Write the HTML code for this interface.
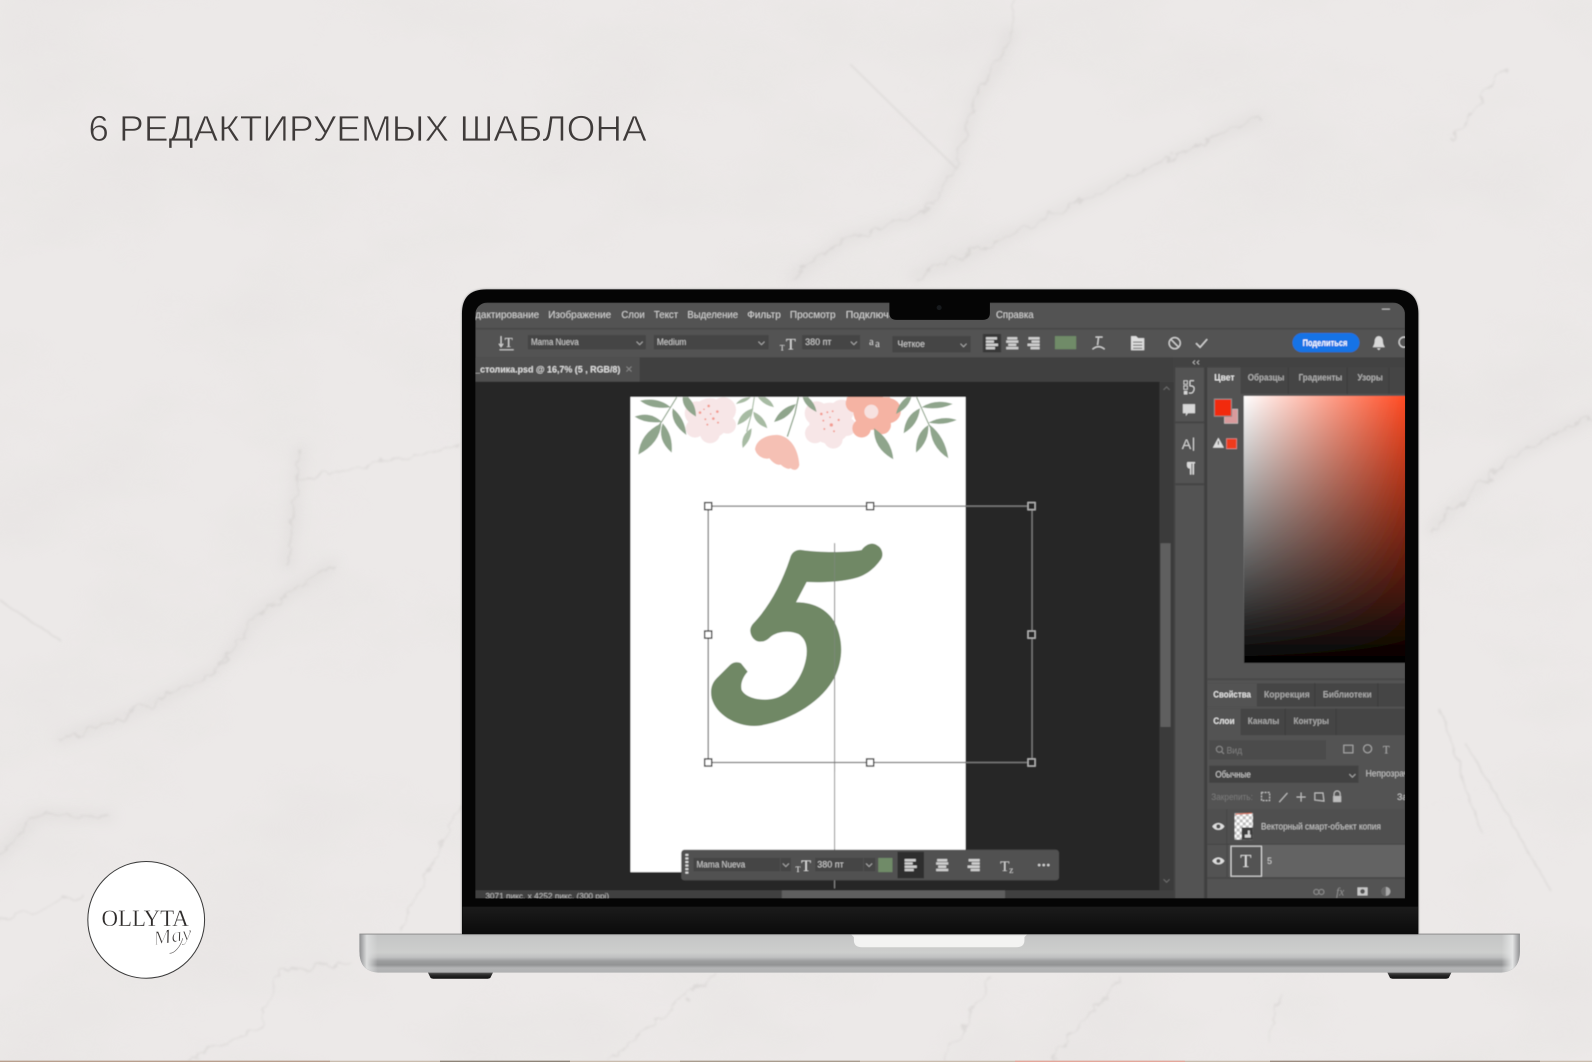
<!DOCTYPE html>
<html lang="ru"><head><meta charset="utf-8"><title>6 редактируемых шаблона</title>
<style>html,body{margin:0;padding:0;background:#ece9e8;overflow:hidden}svg{display:block}text{font-family:"Liberation Sans","Noto Sans CJK SC",sans-serif}</style></head>
<body>
<svg xmlns="http://www.w3.org/2000/svg" width="1592" height="1062" viewBox="0 0 1592 1062">
<defs>
<filter id="cloud" x="0" y="0" width="100%" height="100%"><feTurbulence type="fractalNoise" baseFrequency="0.006 0.009" numOctaves="5" seed="11"/><feColorMatrix values="0 0 0 0 .66  0 0 0 0 .64  0 0 0 0 .63  1.5 0 0 0 -.62"/></filter>
<filter id="v1" x="-5%" y="-5%" width="110%" height="110%"><feTurbulence type="fractalNoise" baseFrequency=".07" numOctaves="3" seed="3" result="n"/><feDisplacementMap in="SourceGraphic" in2="n" scale="12" result="d"/><feGaussianBlur in="d" stdDeviation="1.100"/></filter>
<filter id="v3" x="-5%" y="-5%" width="110%" height="110%"><feGaussianBlur stdDeviation="6"/></filter>
<filter id="soft" x="-2%" y="-2%" width="104%" height="104%"><feGaussianBlur stdDeviation=".48"/></filter>
<filter id="edge" x="-2%" y="-2%" width="104%" height="104%"><feGaussianBlur stdDeviation="1"/></filter>
<clipPath id="scr"><path d="M468 885V310a12 12 0 0 1 12-12h892a12 12 0 0 1 12 12v575z"/></clipPath>
<clipPath id="mn"><rect x="468" y="298" width="408" height="30"/></clipPath>
<clipPath id="doc"><rect x="621" y="391" width="330" height="468"/></clipPath>
<linearGradient id="sat"><stop offset="0" stop-color="#fff"/><stop offset="1" stop-color="#ff4a22"/></linearGradient>
<linearGradient id="blk" x2="0" y2="1"><stop offset="0" stop-color="#000" stop-opacity="0"/><stop offset="1" stop-color="#000"/></linearGradient>
<linearGradient id="base" x2="0" y2="1"><stop offset="0" stop-color="#c4c5c5"/><stop offset=".48" stop-color="#cdcecd"/><stop offset=".6" stop-color="#bfc0c0"/><stop offset=".7" stop-color="#9c9d9e"/><stop offset=".8" stop-color="#929394"/><stop offset=".88" stop-color="#b4b5b6"/><stop offset="1" stop-color="#b0b1b2"/></linearGradient>
<linearGradient id="endL"><stop offset="0" stop-color="#8d8e90"/><stop offset=".4" stop-color="#dcdddd"/><stop offset="1" stop-color="#dcdddd" stop-opacity="0"/></linearGradient>
<linearGradient id="endR"><stop offset="0" stop-color="#e4e5e5" stop-opacity="0"/><stop offset=".6" stop-color="#e4e5e5"/><stop offset="1" stop-color="#8d8e90"/></linearGradient>
<linearGradient id="chin" x2="0" y2="1"><stop offset="0" stop-color="#1b1b1b"/><stop offset="1" stop-color="#0b0b0b"/></linearGradient>
<linearGradient id="foot" x2="0" y2="1"><stop offset="0" stop-color="#6a6a6a"/><stop offset=".45" stop-color="#2b2b2b"/><stop offset="1" stop-color="#0e0e0e"/></linearGradient>
<pattern id="chk" width="6" height="6" patternUnits="userSpaceOnUse"><rect width="6" height="6" fill="#fff"/><rect width="3" height="3" fill="#bdbdbd"/><rect x="3" y="3" width="3" height="3" fill="#bdbdbd"/></pattern>
<g id="al"><rect x="-6" y="-6" width="11" height="2.500"/><rect x="-6" y="-2.800" width="8" height="2.500"/><rect x="-6" y=".4" width="12" height="2.500"/><rect x="-6" y="3.600" width="9" height="2.500"/></g>
<g id="ac"><rect x="-5" y="-6" width="10" height="2.500"/><rect x="-6" y="-2.800" width="12" height="2.500"/><rect x="-4" y=".4" width="8" height="2.500"/><rect x="-6" y="3.600" width="12" height="2.500"/></g>
<g id="ar"><rect x="-5" y="-6" width="11" height="2.500"/><rect x="-2" y="-2.800" width="8" height="2.500"/><rect x="-6" y=".4" width="12" height="2.500"/><rect x="-3" y="3.600" width="9" height="2.500"/></g>
<g id="eye"><path d="M-6 0C-3-4.500 3-4.500 6 0 3 4.500-3 4.500-6 0z" fill="#dedede"/><circle r="2" fill="#4d4d4d"/></g>
<path id="chev" d="M-3-1.500 0 1.500 3-1.500" fill="none" stroke="#a8a8a8" stroke-width="1"/>
</defs>

<rect width="1592" height="1062" fill="#ece9e8"/>
<rect width="1592" height="1062" filter="url(#cloud)" opacity=".2"/>
<g fill="none" stroke="#c9c6c4" stroke-linecap="round" stroke-linejoin="round">
<g filter="url(#v3)" opacity=".2" stroke-width="12">
<path d="M1010 33L1000 60 975 100 955 167 925 213 843 240 792 277"/><path d="M1259 117L1117 183 1015 233 914 277"/><path d="M60 740L140 710 217 670 260 612 333 565"/><path d="M0 855L37 815 110 817"/><path d="M1592 415L1517 455 1467 495 1430 530"/><path d="M300 450L293 520 287 565"/>
</g>
<g filter="url(#v1)" opacity=".42" stroke-width="1.500">
<path d="M1015 0L1010 33 1000 60 975 100 955 167 925 213 843 240 792 277"/><path d="M853 67L914 127 955 167"/><path d="M1259 117L1117 183 1015 233 914 277"/><path d="M1505 67L1452 140"/>
<path d="M0 855L37 815 110 817"/><path d="M60 740L140 710 217 670 260 612 333 565"/><path d="M300 480L460 445"/><path d="M300 450L293 520 287 565"/><path d="M0 920L83 895"/><path d="M280 970L353 965"/><path d="M280 970L260 1030 187 1060"/><path d="M460 805L400 930"/><path d="M0 600L60 640"/>
<path d="M1592 415L1517 455 1467 495 1430 530"/><path d="M1440 710L1480 830"/><path d="M1467 745L1550 890"/>
<path d="M715 973L608 1060"/><path d="M990 977L945 1060"/><path d="M1120 977L1052 1060"/><path d="M1282 995L1268 1040"/>
</g></g>

<g transform="scale(1.0153)">
<text x="87" y="139" font-size="36" fill="#3f3b3a" stroke="#ece9e8" stroke-width=".75" textLength="550" lengthAdjust="spacingAndGlyphs">6 РЕДАКТИРУЕМЫХ ШАБЛОНА</text>

<!-- logo -->
<circle cx="144" cy="906" r="57.500" fill="#fff" stroke="#3a3a3a" stroke-width="1"/>
<text x="100" y="912" style='font-family:"Liberation Serif",serif' font-size="22.500" fill="#2e2b2a" stroke="#fff" stroke-width=".25" textLength="86" lengthAdjust="spacingAndGlyphs">OLLYTA</text>
<text x="152" y="931" style='font-family:"Liberation Serif",serif' font-style="italic" font-size="20" fill="#3b3837" stroke="#fff" stroke-width=".65" textLength="38" lengthAdjust="spacingAndGlyphs" transform="rotate(-9 152 931)">May</text>
<path d="M180 924C178 932 172 939 167 939" fill="none" stroke="#5a5756" stroke-width=".6"/>

<!-- laptop -->
<path d="M421 957h65l-3 6q-1 1-4 1h-51q-3 0-4-1zM1366 957h64l-3 6q-1 1-4 1h-50q-3 0-4-1z" fill="url(#foot)"/>
<path d="M354 920H1497V937Q1497 958 1476 958H375Q354 958 354 937z" fill="url(#base)"/>
<path d="M354 920h18v38q-18-2-18-21z" fill="url(#endL)"/>
<path d="M1479 920h18v17q0 19-18 21z" fill="url(#endR)"/>
<path d="M838 920h174l-3 3v3q0 7-8 7H849q-8 0-8-7v-3z" fill="#f3f3f2"/>
<rect x="354" y="919.500" width="1143" height="1" fill="#8f8f8f"/>
<path d="M455 920V309q0-24 24-24h894q24 0 24 24v611z" fill="#8c8c8c" filter="url(#edge)"/>
<path d="M455 920V309q0-24 24-24h894q24 0 24 24v611z" fill="#050505"/>
<rect x="455.500" y="893" width="941" height="27" fill="url(#chin)"/>

<g clip-path="url(#scr)"><g filter="url(#soft)">
<rect x="468" y="298" width="916" height="587" fill="#535353"/>
<!-- menu -->
<rect x="468" y="323" width="916" height="1.500" fill="#464646"/>
<g clip-path="url(#mn)" font-size="10.400" fill="#d4d4d4">
<text x="468" y="313" textLength="63" lengthAdjust="spacingAndGlyphs">дактирование</text>
<text x="540" y="313" textLength="62" lengthAdjust="spacingAndGlyphs">Изображение</text>
<text x="612" y="313" textLength="23" lengthAdjust="spacingAndGlyphs">Слои</text>
<text x="644" y="313" textLength="24" lengthAdjust="spacingAndGlyphs">Текст</text>
<text x="677" y="313" textLength="50" lengthAdjust="spacingAndGlyphs">Выделение</text>
<text x="736" y="313" textLength="33" lengthAdjust="spacingAndGlyphs">Фильтр</text>
<text x="778" y="313" textLength="45" lengthAdjust="spacingAndGlyphs">Просмотр</text>
<text x="833" y="313" textLength="48" lengthAdjust="spacingAndGlyphs">Подключа</text>
</g>
<text x="981" y="313" font-size="10.400" fill="#d4d4d4" textLength="37" lengthAdjust="spacingAndGlyphs">Справка</text>
<rect x="1361" y="304" width="8" height="1" fill="#c8c8c8"/>

<!-- options -->
<g fill="#d6d6d6">
<path d="M493.500 331v9M491.500 338.500l2 3 2-3" fill="none" stroke="#d6d6d6" stroke-width="1.100"/>
<text x="497" y="342" font-size="13" style='font-family:"Liberation Serif",serif'>T</text>
<rect x="492" y="344" width="14" height="1"/>
<text x="774" y="344" font-size="16" style='font-family:"Liberation Serif",serif'>T</text>
<text x="768" y="345" font-size="8" style='font-family:"Liberation Serif",serif'>T</text>
<text x="856" y="340" font-size="10" style='font-family:"Liberation Serif",serif'>a</text><text x="862" y="342" font-size="10" style='font-family:"Liberation Serif",serif'>a</text>
</g>
<g fill="#454545">
<rect x="520" y="330" width="116" height="14"/><rect x="644" y="330" width="113" height="14"/><rect x="790" y="330" width="57" height="14"/><rect x="879" y="331" width="77" height="16"/>
</g>
<g fill="#cfcfcf" font-size="8.600">
<text x="523" y="340" textLength="47" lengthAdjust="spacingAndGlyphs">Mama Nueva</text>
<text x="647" y="340" textLength="29" lengthAdjust="spacingAndGlyphs">Medium</text>
<text x="793" y="340" textLength="26" lengthAdjust="spacingAndGlyphs">380 пт</text>
<text x="884" y="342" textLength="27" lengthAdjust="spacingAndGlyphs">Четкое</text>
</g>
<use href="#chev" x="630" y="338"/><use href="#chev" x="750" y="338"/><use href="#chev" x="841" y="338"/><use href="#chev" x="949" y="340"/>
<rect x="968" y="329" width="18" height="18" fill="#393939"/>
<g fill="#cfcfcf"><use href="#al" x="977" y="338"/><use href="#ac" x="997" y="338"/><use href="#ar" x="1018" y="338"/></g>
<rect x="1039" y="331" width="21" height="13" fill="#6f8b68"/>
<g fill="none" stroke="#cfcfcf" stroke-width="1.300">
<path d="M1079 332h7M1082 332l-1 8M1076 344q6-5 12 0"/>
<circle cx="1157" cy="338" r="5.500"/><path d="M1153 334l8 8"/>
<path d="M1178 338l4 4 7-8" stroke-width="1.500"/>
</g>
<path d="M1114 331h5l2 2h6v12h-13z" fill="#dedede"/><path d="M1116 337h9M1116 340h9M1116 343h9" stroke="#666" stroke-width="1"/>
<rect x="1273" y="328" width="66" height="19" rx="9.500" fill="#1473e6"/>
<text x="1283" y="341" font-size="8.600" fill="#fff" font-weight="bold" textLength="44" lengthAdjust="spacingAndGlyphs">Поделиться</text>
<path d="M1358 331q-3 0-4 4c0 4-1 5-2 7h12c-1-2-2-3-2-7q-1-4-4-4zM1356 343h4l-2 2z" fill="#d8d8d8"/>
<circle cx="1383" cy="337" r="5" fill="none" stroke="#d0d0d0" stroke-width="1.300"/>

<!-- tab row -->
<rect x="468" y="352" width="688" height="24" fill="#414141"/>
<rect x="468" y="352" width="162" height="24" fill="#4f4f4f"/>
<text x="468" y="367" font-size="9.400" font-weight="bold" fill="#dedede" textLength="143" lengthAdjust="spacingAndGlyphs">_столика.psd @ 16,7% (5 , RGB/8)</text>
<path d="M617 361l5 5M622 361l-5 5" stroke="#8c8c8c" stroke-width=".9"/>

<!-- canvas -->
<rect x="468" y="376" width="674" height="501" fill="#282828"/>
<rect x="1142" y="376" width="14" height="501" fill="#3a3a3a"/>
<rect x="1143" y="535" width="10" height="181" fill="#5e5e5e"/>
<path d="M1146 384l3-3 3 3M1146 866l3 3 3-3" fill="none" stroke="#6c6c6c"/>
<rect x="468" y="877" width="688" height="8" fill="#3f3f3f"/>
<rect x="770" y="877" width="220" height="8" fill="#5e5e5e"/>
<text x="478" y="885.500" font-size="8.500" fill="#bdbdbd" textLength="122" lengthAdjust="spacingAndGlyphs">3071 пикс. x 4252 пикс. (300 ppi)</text>
<rect x="621" y="391" width="330" height="468" fill="#fff"/>

<!-- flowers -->
<g clip-path="url(#doc)"><g transform="translate(610.66 384.1) scale(.3283)">
<g fill="#f7e6e7">
<circle cx="270" cy="85" r="60"/><circle cx="230" cy="70" r="36"/><circle cx="310" cy="60" r="38"/><circle cx="322" cy="105" r="26"/><circle cx="270" cy="130" r="30"/><circle cx="225" cy="115" r="28"/>
<circle cx="630" cy="100" r="62"/><circle cx="590" cy="70" r="36"/><circle cx="665" cy="65" r="36"/><circle cx="680" cy="110" r="28"/><circle cx="640" cy="148" r="28"/><circle cx="585" cy="130" r="30"/>
</g>
<g fill="#f5b3a3">
<circle cx="755" cy="65" r="55"/><circle cx="705" cy="40" r="28"/><circle cx="805" cy="62" r="38"/><circle cx="725" cy="115" r="28"/><circle cx="785" cy="105" r="28"/><rect x="680" y="22" width="130" height="30"/>
</g>
<circle cx="754" cy="65" r="21" fill="#f7e2e0"/>
<g fill="#f29c92"><circle cx="240" cy="68" r="4"/><circle cx="266" cy="48" r="4"/><circle cx="252" cy="58" r="2.500"/><circle cx="292" cy="65" r="4"/><circle cx="272" cy="72" r="2.500"/><circle cx="256" cy="88" r="3"/><circle cx="280" cy="86" r="4"/><circle cx="294" cy="98" r="3"/><circle cx="262" cy="104" r="3"/><circle cx="604" cy="72" r="4"/><circle cx="622" cy="67" r="3"/><circle cx="638" cy="64" r="3"/><circle cx="630" cy="82" r="2.500"/><circle cx="610" cy="92" r="3"/><circle cx="656" cy="90" r="3.500"/><circle cx="634" cy="105" r="5"/><circle cx="613" cy="117" r="3"/><circle cx="642" cy="124" r="3"/></g>
<path d="M405 178C408 150 440 133 475 135 510 140 535 175 538 225 535 240 522 244 512 235 505 240 490 232 482 224 470 228 455 215 448 205 435 210 410 200 405 178z" fill="#f5c0b4"/>
<g fill="none" stroke="#8fa68c" stroke-width="3.500"><path d="M170 22L125 95 85 150"/><path d="M890 22L925 100 960 170"/></g>
<path d="M403 22L395 70 380 125" fill="none" stroke="#a6bba2" stroke-width="3.500"/>
<path d="M535 22L525 70 502 140" fill="none" stroke="#8fa68c" stroke-width="4"/>
<g fill="#8fa58c">
<path d="M60 32Q115 20 152 52Q95 60 60 32z"/><path d="M44 80Q90 62 126 96Q75 102 44 80z"/><path d="M55 194Q60 130 124 100Q120 160 55 194z"/><path d="M155 188Q110 150 128 100Q160 135 155 188z"/><path d="M199 135Q150 100 158 55Q195 85 199 135z"/><path d="M228 80Q185 55 188 22H205Q228 45 228 80z"/>
<path d="M462 96Q480 52 528 42Q510 85 462 96z"/><path d="M590 66Q555 50 548 22H565Q585 40 590 66z"/>
<path d="M828 72Q835 40 860 22H874Q865 55 828 72z"/><path d="M905 52Q945 25 998 42Q955 62 905 52z"/><path d="M851 130Q855 75 900 55Q895 105 851 130z"/><path d="M925 98Q970 75 1010 90Q970 108 925 98z"/><path d="M888 188Q885 130 925 105Q928 155 888 188z"/><path d="M985 205Q930 170 930 105Q975 140 985 205z"/>
<path d="M820 208Q760 175 762 115Q815 150 820 208z"/>
</g>
<g fill="#a7bba3"><path d="M348 42Q362 22 392 22Q380 38 348 42z"/><path d="M462 52Q430 45 414 22H436Q455 32 462 52z"/><path d="M352 105Q360 65 400 55Q395 90 352 105z"/><path d="M442 115Q400 100 400 65Q435 80 442 115z"/><path d="M368 174Q360 135 395 115Q395 150 368 174z"/></g>
</g></g>

<!-- guide + 5 -->
<rect x="821.500" y="535" width="1" height="340" fill="#8c8c8c"/>
<g transform="translate(669.750 482.600) scale(.3283)">
<path fill="#6f8865" d="M330 205C335 185 350 178 365 180C420 188 500 188 545 180C555 165 575 155 590 165C610 175 612 200 600 212C580 240 550 262 510 268C470 276 420 278 380 276L348 337C400 336 450 360 470 410C490 460 488 510 465 560C430 630 340 690 240 707C180 715 110 680 95 625C90 600 95 580 110 565L150 525C160 515 175 515 183 520L203 545C190 560 180 580 185 600C195 620 230 632 270 628C320 622 355 580 372 530C385 490 385 450 355 432C325 420 290 425 270 442C250 462 220 460 212 430C208 415 215 405 225 395C270 345 305 280 330 205Z"/>
</g>
<rect x="821.500" y="535" width="1" height="225" fill="#8c8c8c" opacity=".45"/>
<g fill="none" stroke="#7c7c7c" stroke-width="1.300"><rect x="697.500" y="498.500" width="319" height="252.500"/></g>
<g fill="#fff" stroke="#2a2a2a" stroke-width="1.300"><rect x="694" y="495" width="7" height="7"/><rect x="853.500" y="495" width="7" height="7"/><rect x="694" y="621.500" width="7" height="7"/><rect x="694" y="747.500" width="7" height="7"/><rect x="853.500" y="747.500" width="7" height="7"/></g>
<g fill="#282828" stroke="#b8b8b8" stroke-width="1.300"><rect x="1012.500" y="495" width="7" height="7"/><rect x="1012.500" y="621.500" width="7" height="7"/><rect x="1012.500" y="747.500" width="7" height="7"/></g>

<!-- float bar -->
<rect x="671" y="837" width="372" height="30" rx="3" fill="#515151"/>
<g fill="#dcdcdc"><rect x="675" y="841" width="3" height="2"/><rect x="675" y="844.500" width="3" height="2"/><rect x="675" y="848" width="3" height="2"/><rect x="675" y="851.500" width="3" height="2"/><rect x="675" y="855" width="3" height="2"/><rect x="675" y="858.500" width="3" height="2"/></g>
<rect x="683" y="845" width="85" height="13" fill="#454545"/><rect x="769" y="845" width="10" height="13" fill="#454545"/>
<rect x="803" y="845" width="47" height="13" fill="#454545"/><rect x="851" y="845" width="11" height="13" fill="#454545"/>
<text x="686" y="854.500" font-size="8.600" fill="#cfcfcf" textLength="48" lengthAdjust="spacingAndGlyphs">Mama Nueva</text>
<text x="805" y="854.500" font-size="8.600" fill="#cfcfcf" textLength="26" lengthAdjust="spacingAndGlyphs">380 пт</text>
<use href="#chev" x="774" y="852"/><use href="#chev" x="856" y="852"/>
<text x="789" y="858" font-size="16" fill="#dedede" style='font-family:"Liberation Serif",serif'>T</text><text x="783.500" y="859" font-size="8" fill="#dedede" style='font-family:"Liberation Serif",serif'>T</text>
<rect x="865" y="845" width="14" height="14" fill="#6f8b68"/>
<rect x="884" y="839" width="26" height="26" fill="#2e2e2e"/>
<g fill="#cfcfcf"><use href="#al" x="897" y="852"/><use href="#ac" x="928" y="852"/><use href="#ar" x="959" y="852"/>
<text x="985" y="858" font-size="15" style='font-family:"Liberation Serif",serif'>T</text><text x="994" y="860" font-size="9" style='font-family:"Liberation Serif",serif'>z</text>
<circle cx="1023.500" cy="852" r="1.300"/><circle cx="1028" cy="852" r="1.300"/><circle cx="1032.500" cy="852" r="1.300"/></g>

<!-- right panels -->
<rect x="1156" y="352" width="228" height="533" fill="#535353"/>
<rect x="1156" y="352" width="228" height="10" fill="#424242"/>
<path d="M1177 355l-2 2 2 2M1181 355l-2 2 2 2" fill="none" stroke="#bcbcbc" stroke-width=".8"/>
<rect x="1186" y="362" width="3" height="523" fill="#3f3f3f"/>
<rect x="1156" y="362" width="1.500" height="523" fill="#404040"/>
<rect x="1157" y="415" width="29" height="2" fill="#444"/><rect x="1157" y="476" width="29" height="2" fill="#444"/>
<g fill="#d8d8d8">
<rect x="1166" y="375" width="3.500" height="3.500" fill="none" stroke="#d8d8d8" stroke-width=".8"/><rect x="1166" y="380" width="3.500" height="3.500" fill="none" stroke="#d8d8d8" stroke-width=".8"/><rect x="1166" y="385" width="3.500" height="3.500"/>
<path d="M1172 375h4M1172 375v5q5 0 4 4t-5 3" fill="none" stroke="#d8d8d8" stroke-width="1.100"/>
<path d="M1165 398h12v9h-7l-2 3v-3h-3z"/>
<text x="1164" y="442" font-size="14" fill="#d0d0d0">A</text><rect x="1175" y="431" width="1" height="13"/>
<path d="M1170 455h7v1.500h-1v11h-1.500v-11h-1v11H1172v-6q-3 0-3-3.500t1-3z"/>
</g>

<!-- color panel -->
<rect x="1222" y="362" width="162" height="26" fill="#454545"/>
<path d="M1269 362v26M1327 362v26M1368 362v26" stroke="#3c3c3c"/>
<g font-size="9" font-weight="bold"><text x="1196" y="375" fill="#e8e8e8" textLength="20" lengthAdjust="spacingAndGlyphs">Цвет</text>
<g fill="#aeaeae"><text x="1229" y="375" textLength="36" lengthAdjust="spacingAndGlyphs">Образцы</text><text x="1279" y="375" textLength="43" lengthAdjust="spacingAndGlyphs">Градиенты</text><text x="1337" y="375" textLength="25" lengthAdjust="spacingAndGlyphs">Узоры</text></g></g>
<rect x="1206" y="403" width="13" height="14" fill="#d99a9c" stroke="#c8c8c8" stroke-width=".6"/>
<rect x="1196" y="393" width="17" height="17" fill="#f22c08" stroke="#8a8a8a" stroke-width="1"/>
<path d="M1200 431l5.500 10h-11z" fill="#dedede"/><rect x="1199.500" y="434.500" width="1" height="3.500" fill="#444"/>
<rect x="1208" y="432" width="10" height="10" fill="#ee3a1c" stroke="#d99a9c" stroke-width=".6"/>
<rect x="1225" y="390" width="160" height="263" fill="url(#sat)"/>
<rect x="1225" y="390" width="160" height="263" fill="url(#blk)"/>

<!-- lower tabs -->
<rect x="1189" y="668" width="195" height="2" fill="#4a4a4a"/>
<rect x="1189" y="673" width="195" height="23" fill="#454545"/>
<rect x="1189" y="673" width="49" height="23" fill="#535353"/>
<path d="M1295 673v23M1357 673v23" stroke="#3c3c3c"/>
<rect x="1189" y="698" width="195" height="26" fill="#454545"/>
<rect x="1189" y="698" width="33" height="26" fill="#535353"/>
<path d="M1266 698v26M1316 698v26" stroke="#3c3c3c"/>
<g font-size="9" font-weight="bold"><g fill="#e4e4e4"><text x="1195" y="687" textLength="37" lengthAdjust="spacingAndGlyphs">Свойства</text><text x="1195" y="713" textLength="21" lengthAdjust="spacingAndGlyphs">Слои</text></g>
<g fill="#a8a8a8"><text x="1245" y="687" textLength="45" lengthAdjust="spacingAndGlyphs">Коррекция</text><text x="1303" y="687" textLength="48" lengthAdjust="spacingAndGlyphs">Библиотеки</text><text x="1229" y="713" textLength="31" lengthAdjust="spacingAndGlyphs">Каналы</text><text x="1274" y="713" textLength="35" lengthAdjust="spacingAndGlyphs">Контуры</text></g></g>

<rect x="1191" y="729" width="115" height="19" fill="#4c4c4c"/>
<circle cx="1201" cy="738" r="3" fill="none" stroke="#8c8c8c"/><path d="M1203 740l2.500 2.500" stroke="#8c8c8c"/>
<text x="1208" y="742" font-size="8.600" fill="#7e7e7e">Вид</text>
<g fill="none" stroke="#aaa" stroke-width="1"><rect x="1323.500" y="734" width="9" height="7.500"/><circle cx="1347" cy="737.500" r="4"/></g>
<text x="1362" y="742" font-size="11" fill="#aaa" style='font-family:"Liberation Serif",serif'>T</text>
<rect x="1191" y="754" width="147" height="17" fill="#434343"/>
<text x="1197" y="766" font-size="8.800" fill="#d0d0d0" textLength="35" lengthAdjust="spacingAndGlyphs">Обычные</text>
<use href="#chev" x="1332" y="764"/>
<text x="1345" y="765" font-size="8.800" fill="#c8c8c8" textLength="42" lengthAdjust="spacingAndGlyphs">Непрозрач</text>
<text x="1193" y="788" font-size="8.800" fill="#7a7a7a" textLength="41" lengthAdjust="spacingAndGlyphs">Закрепить:</text>
<g fill="none" stroke="#bdbdbd" stroke-width="1.100"><rect x="1242.500" y="780.500" width="8" height="8" stroke-dasharray="2 1"/><path d="M1260 790l8-9M1277 785h9M1281.500 780.500v9M1295 781h8l1 8-9-1zM1314 784v-2a3 3 0 0 1 6 0v2"/></g>
<rect x="1313" y="784" width="8" height="6" fill="#bdbdbd"/>
<text x="1376" y="788" font-size="8.800" fill="#c8c8c8">За</text>

<rect x="1189" y="797" width="195" height="34" fill="#4f4f4f"/>
<rect x="1189" y="831" width="195" height="1" fill="#444"/>
<rect x="1211" y="832" width="173" height="32" fill="#636363"/>
<rect x="1189" y="864" width="195" height="1.500" fill="#464646"/>
<rect x="1208" y="797" width="1" height="68" fill="#474747"/>
<use href="#eye" x="1200" y="814"/><use href="#eye" x="1200" y="848"/>
<rect x="1216" y="801" width="18" height="26" fill="url(#chk)"/>
<path d="M1217 802l16-1" stroke="#e06c54" stroke-width="1"/>
<rect x="1223" y="815" width="11" height="12" fill="#3e3e3e"/><path d="M1226 822h3v-4h2v4h1v3h-6z" fill="#d8d8d8"/>
<text x="1242" y="817" font-size="8.800" fill="#c8c8c8" textLength="118" lengthAdjust="spacingAndGlyphs">Векторный смарт-объект копия</text>
<rect x="1212.500" y="833.500" width="30" height="29.500" fill="#535353" stroke="#dcdcdc" stroke-width="1"/>
<text x="1221.500" y="854" font-size="18" fill="#dedede" style='font-family:"Liberation Serif",serif'>T</text>
<text x="1248" y="851" font-size="8.600" fill="#cfcfcf">5</text>
<g fill="none" stroke="#8f8f8f" stroke-width="1"><circle cx="1296.500" cy="878.500" r="2.500"/><circle cx="1301.500" cy="878.500" r="2.500"/></g>
<text x="1316" y="882" font-size="11" font-style="italic" fill="#929292" style='font-family:"Liberation Serif",serif'>fx</text>
<rect x="1337" y="874" width="10" height="8" fill="#c8c8c8"/><circle cx="1342" cy="878" r="2.300" fill="#535353"/>
<circle cx="1365" cy="878" r="4.500" fill="#a8a8a8"/><path d="M1365 873.500a4.500 4.500 0 0 0 0 9z" fill="#666"/>
</g></g>

<!-- notch -->
<path d="M876 296H975V308Q975 315 968 315H883Q876 315 876 308z" fill="#050505"/>
<circle cx="925" cy="303" r="2.500" fill="#171a1d"/>
</g>

<!-- sliver of next slide -->
<g transform="translate(0 1060.700)">
<rect width="1592" height="1.300" fill="#c9bcae"/>
<rect x="0" width="330" height="1.300" fill="#b89f8e"/><rect x="440" width="130" height="1.300" fill="#8d8478"/><rect x="680" width="180" height="1.300" fill="#a89c8e"/><rect x="1015" width="170" height="1.300" fill="#e3a79b"/><rect x="1270" width="270" height="1.300" fill="#9b8c80"/>
</g>
</svg>
</body></html>
